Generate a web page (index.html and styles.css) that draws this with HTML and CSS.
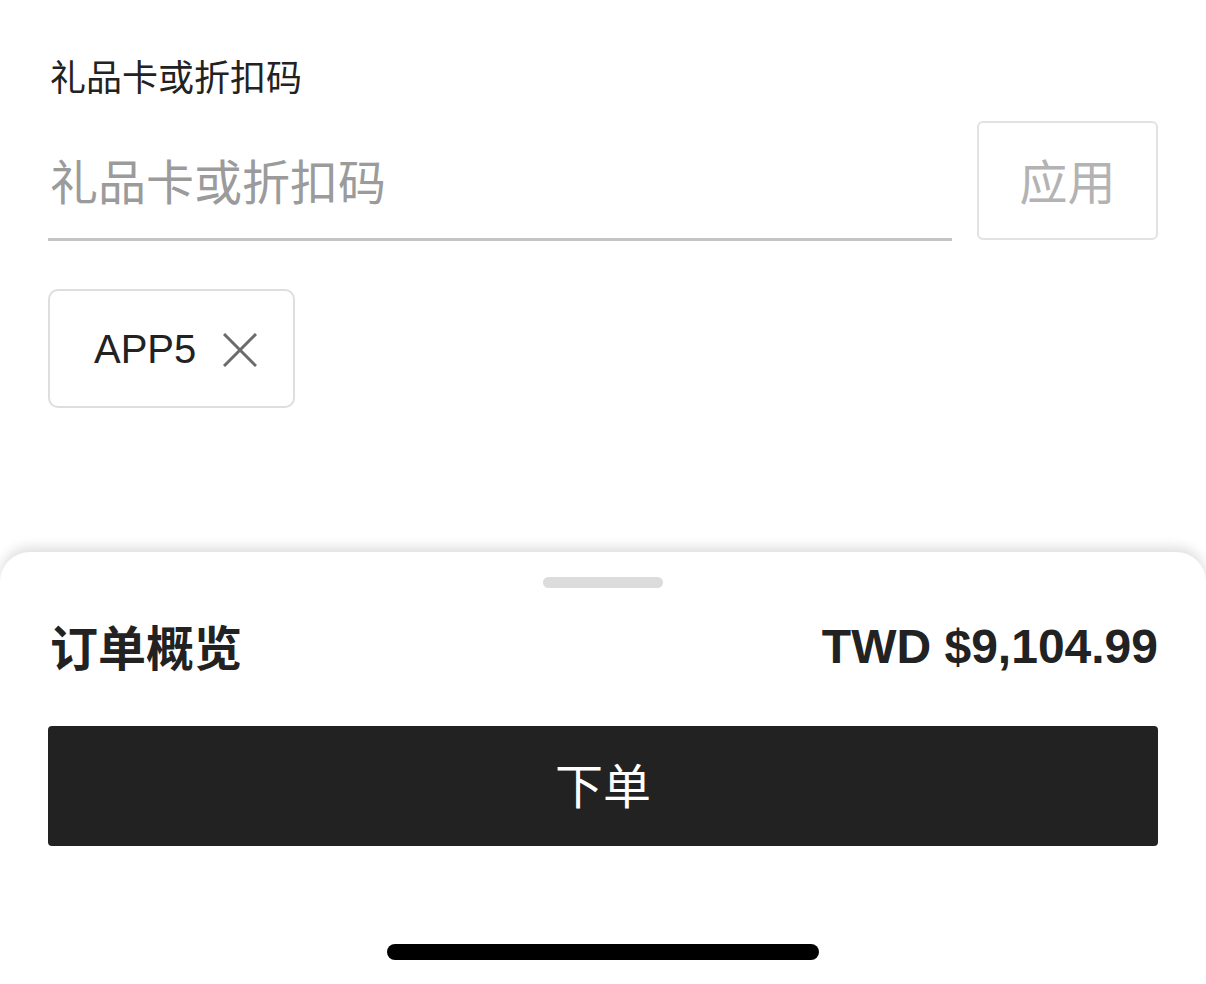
FILE: index.html
```html
<!DOCTYPE html>
<html lang="zh-CN">

<head>
    <meta charset="UTF-8">
    <meta name="viewport" content="width=device-width, initial-scale=1.0">
    <title>结账</title>
    <link rel="stylesheet" href="styles.css">
</head>

<body>
    <div class="page">
        <div class="promo">
            <div class="promo-label">礼品卡或折扣码</div>
            <div class="promo-row">
                <div class="promo-input">
                    <input type="text" placeholder="礼品卡或折扣码">
                </div>
                <button class="apply">应用</button>
            </div>
            <div class="chip">
                <span class="chip-text">APP5</span>
                <svg class="chip-close" width="34" height="34" viewBox="0 0 34 34">
                    <path d="M1 1 L33 33 M33 1 L1 33" stroke="#6b6b6b" stroke-width="3" fill="none" />
                </svg>
            </div>
        </div>

        <div class="sheet">
            <div class="handle"></div>
            <div class="summary">
                <div class="summary-title">订单概览</div>
                <div class="summary-total">TWD $9,104.99</div>
            </div>
            <button class="place-order">下单</button>
            <div class="home-bar"></div>
        </div>
    </div>
</body>

</html>
```

FILE: styles.css
```css
body {
    margin: 0;
    background-color: #fff;
    font-family: "Noto Sans CJK SC", "Liberation Sans", sans-serif;
    color: #222;
}

.page {
    width: 1206px;
    height: 984px;
    display: flex;
    flex-direction: column;
    overflow: hidden;
}

.promo {
    padding: 55px 48px 0 48px;
}

.promo-label {
    font-size: 36px;
    line-height: 40px;
    height: 40px;
    padding-left: 2px;
}

.promo-row {
    display: flex;
    gap: 25px;
    margin-top: 26px;
}

.promo-input {
    flex: 1;
    height: 117px;
    border-bottom: 3px solid #c4c4c4;
    display: flex;
    align-items: center;
}

.promo-input input {
    width: 100%;
    border: none;
    outline: none;
    padding: 0 0 0 2px;
    margin-bottom: 2px;
    font-family: "Noto Sans CJK SC", sans-serif;
    font-size: 48px;
    color: #222;
    background: none;
}

.promo-input input::placeholder {
    color: #9b9b9b;
}

.apply {
    width: 181px;
    height: 119px;
    box-sizing: border-box;
    border: 2px solid #e2e2e2;
    border-radius: 6px;
    background-color: #fff;
    color: #b3b3b3;
    font-family: "Noto Sans CJK SC", sans-serif;
    font-size: 48px;
    padding: 0 0 4px 0;
}

.chip {
    margin-top: 48px;
    width: 247px;
    height: 119px;
    box-sizing: border-box;
    border: 2px solid #dedede;
    border-radius: 10px;
    display: flex;
    align-items: center;
    padding-left: 44px;
    gap: 27px;
}

.chip-text {
    font-family: "Liberation Sans", Arial, sans-serif;
    font-size: 40px;
    color: #222;
    padding-top: 2px;
}

.chip-close {
    display: block;
    margin-top: 2px;
}

.sheet {
    margin-top: 144px;
    flex: 1;
    background-color: #fff;
    border-radius: 30px 30px 0 0;
    box-shadow: 0 -5px 12px rgba(0, 0, 0, 0.13);
    display: flex;
    flex-direction: column;
    align-items: center;
}

.handle {
    width: 120px;
    height: 11px;
    border-radius: 6px;
    background-color: #dcdcdc;
    margin-top: 25px;
}

.summary {
    align-self: stretch;
    display: flex;
    justify-content: space-between;
    align-items: center;
    padding: 0 48px 0 48px;
    margin-top: 27px;
    height: 60px;
}

.summary-title {
    font-size: 48px;
    font-weight: bold;
    padding-left: 2px;
}

.summary-total {
    font-family: "Liberation Sans", Arial, sans-serif;
    font-size: 48px;
    font-weight: bold;
    padding-top: 2px;
}

.place-order {
    width: 1110px;
    height: 120px;
    margin-top: 51px;
    border: none;
    border-radius: 4px;
    background-color: #222;
    color: #fff;
    font-family: "Noto Sans CJK SC", sans-serif;
    font-size: 48px;
    padding: 0 0 6px 0;
}

.home-bar {
    width: 432px;
    height: 16px;
    border-radius: 8px;
    background-color: #000;
    margin-top: 98px;
}
```
